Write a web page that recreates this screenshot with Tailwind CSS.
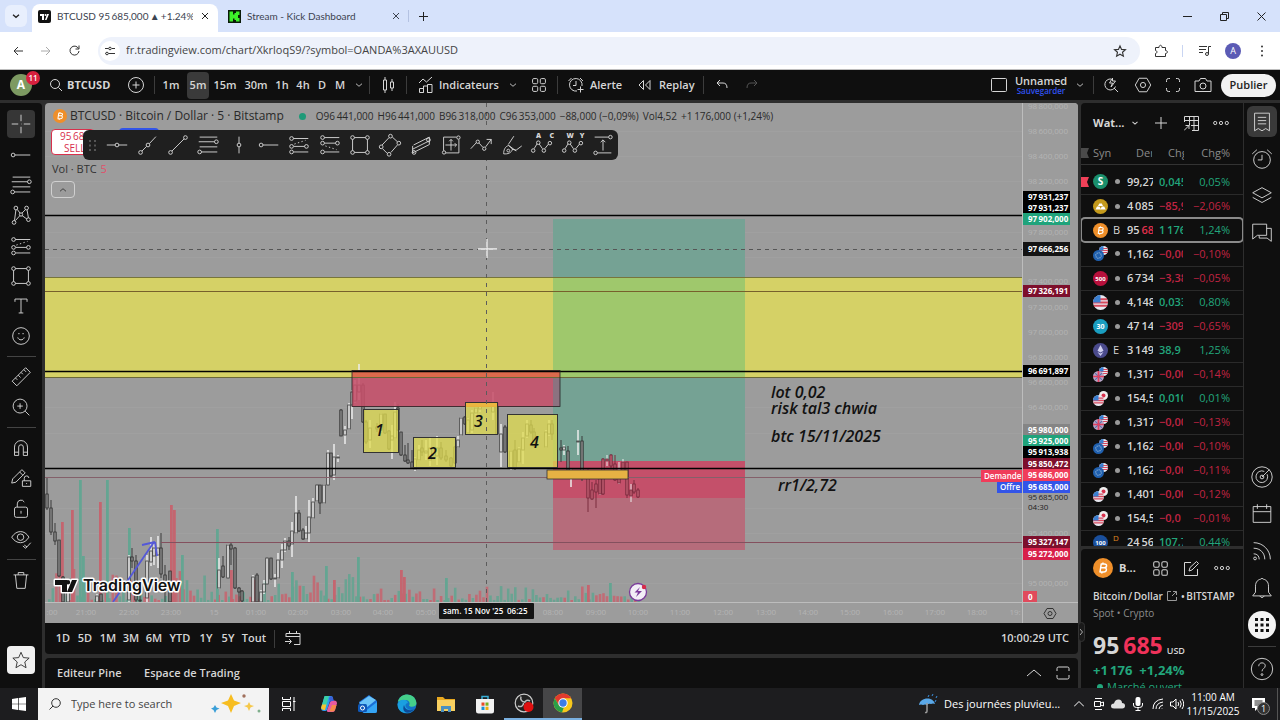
<!DOCTYPE html>
<html lang="fr">
<head>
    <meta charset="UTF-8">
    <meta name="viewport" content="width=device-width, initial-scale=1.0">
    <title>BTCUSD 95 685,000 ▲ +1.24% Unnamed</title>
    <script src="https://cdn.jsdelivr.net/npm/@tailwindcss/browser@4"></script>
</head>
<body class="h-screen flex flex-col overflow-hidden bg-[#2e2e2e] font-['Open_Sans','Noto_Sans',sans-serif] text-[#d6d6d6] text-[11px]">

<!-- icons shared by the toolbars, all on a 28 grid -->
<svg class="hidden">
    <symbol id="i-cross" viewBox="0 0 28 28"><path d="M14 4v7M14 17v7M4 14h7M17 14h7M14 14h.5"/></symbol>
    <symbol id="i-hline" viewBox="0 0 28 28"><path d="M3 14h9M16 14h9"/><circle cx="14" cy="14" r="2"/></symbol>
    <symbol id="i-hray" viewBox="0 0 28 28"><path d="M7.5 14H24"/><circle cx="5.5" cy="14" r="2"/></symbol>
    <symbol id="i-vline" viewBox="0 0 28 28"><path d="M14 5v7M14 16v7"/><circle cx="14" cy="14" r="2"/></symbol>
    <symbol id="i-ray" viewBox="0 0 28 28"><path d="M7.5 20.5l5-5M15.5 12.5L22.5 5"/><circle cx="6" cy="22" r="2"/><circle cx="14" cy="14" r="2"/></symbol>
    <symbol id="i-trend" viewBox="0 0 28 28"><path d="M7.5 20.5l13-13"/><circle cx="6" cy="22" r="2"/><circle cx="22" cy="6" r="2"/></symbol>
    <symbol id="i-fib" viewBox="0 0 28 28"><path d="M5 5.5h19M4 10.5h17M5 16h19M7 21.5h17"/><circle cx="23" cy="10.5" r="2"/><circle cx="5" cy="21.5" r="2"/></symbol>
    <symbol id="i-pattern" viewBox="0 0 28 28"><path d="M7 20L8.5 8.5M10 8l3 4M15 12l4-4M20.5 8.5L22 17M8 20l5-5.5M15 14.5l5.5 4"/><circle cx="6.5" cy="22" r="2"/><circle cx="8.5" cy="6.5" r="2"/><circle cx="14" cy="13.5" r="1.8"/><circle cx="20" cy="6.5" r="2"/><circle cx="22" cy="19" r="2"/></symbol>
    <symbol id="i-long" viewBox="0 0 28 28"><path d="M8 7h16M8.5 15.5H20M8.5 21.5H24"/><path d="M9 13l12-4" stroke-dasharray="1.5 2.5"/><circle cx="6" cy="7" r="2"/><circle cx="6" cy="15.5" r="2"/><circle cx="6" cy="21.5" r="2"/><circle cx="22" cy="15.5" r="2"/></symbol>
    <symbol id="i-short" viewBox="0 0 28 28"><path d="M8 6h16M8 12h12M8.5 21.5H24"/><path d="M9 15l12 4" stroke-dasharray="1.5 2.5"/><circle cx="6" cy="6" r="2"/><circle cx="6" cy="12" r="2"/><circle cx="6" cy="21.5" r="2"/><circle cx="22" cy="12" r="2"/></symbol>
    <symbol id="i-rect" viewBox="0 0 28 28"><path d="M8 6h12M22 8v12M20 22H8M6 20V8"/><circle cx="6" cy="6" r="2"/><circle cx="22" cy="6" r="2"/><circle cx="6" cy="22" r="2"/><circle cx="22" cy="22" r="2"/></symbol>
    <symbol id="i-rot" viewBox="0 0 28 28"><path d="M13 6l-7.5 8M6 18l5 5M15 22l7-8M22 10.5L16.5 5.5"/><circle cx="14.5" cy="4.5" r="2"/><circle cx="23.5" cy="12" r="2"/><circle cx="4.5" cy="16" r="2"/><circle cx="13" cy="24" r="2"/></symbol>
    <symbol id="i-channel" viewBox="0 0 28 28"><path d="M5 15v7.5l18-9V5.5L6 14M5 18.5l18-9"/><circle cx="6.5" cy="22" r="2"/><circle cx="22" cy="8.5" r="2"/></symbol>
    <symbol id="i-range" viewBox="0 0 28 28"><path d="M6 20V5.5h14M22.5 8v14.5H8M14 8v12M8 14h12M12 10l2-2 2 2M18 12l2 2-2 2"/><circle cx="22" cy="6" r="1.8"/><circle cx="6.5" cy="22" r="1.8"/></symbol>
    <symbol id="i-path" viewBox="0 0 28 28"><path d="M3 18l6-6.5M12 12l4 4.5M19 16l6-8M20 8h5v5"/><circle cx="10.5" cy="10.5" r="1.8"/><circle cx="17.5" cy="18" r="1.8"/></symbol>
    <symbol id="i-brush" viewBox="0 0 28 28"><path d="M16 4.5l-6 9M24.5 15l-6 4.5-4.5-1M5 23.5c0-4 1.5-8 5.5-9l4 4c-1 4-5 5.5-9.5 5zM10.5 14.5l8 6"/><circle cx="10" cy="20" r="1.5"/></symbol>
    <symbol id="i-wave" viewBox="0 0 28 28"><path d="M5.5 18l3-5M11 13l3.5 5M17 18l4-5"/><circle cx="4.5" cy="20" r="1.9"/><circle cx="10" cy="11.5" r="1.9"/><circle cx="16" cy="20" r="1.9"/><circle cx="22.5" cy="12" r="1.9"/></symbol>
    <symbol id="i-measure" viewBox="0 0 28 28"><path d="M5 5.5h15M8 22.5h15M14 20V8.5M11.5 11L14 8.5l2.5 2.5"/><circle cx="22" cy="5.5" r="1.9"/><circle cx="6" cy="22.5" r="1.9"/></symbol>
    <symbol id="i-text" viewBox="0 0 28 28"><path d="M7.5 9.5V6.5h13v3M14 6.5V21.5M11.5 21.5h5"/></symbol>
    <symbol id="i-smile" viewBox="0 0 28 28"><circle cx="14" cy="14" r="9"/><path d="M10.5 15.5c1 3.5 6 3.5 7 0M11 11.5h1.5M15.5 11.5h1.5"/></symbol>
    <symbol id="i-ruler" viewBox="0 0 28 28"><path d="M4.5 18.5L19 4l5 5L9.5 23.5zM8 15l2 2M11 12l2.5 2.5M14 9l2 2M17 6l2.5 2.5"/></symbol>
    <symbol id="i-zoom" viewBox="0 0 28 28"><circle cx="13" cy="13" r="7.5"/><path d="M18.5 18.5l4.5 4.5M13 10v6M10 13h6"/></symbol>
    <symbol id="i-magnet" viewBox="0 0 28 28"><path d="M7 22V13a7 7 0 0 1 14 0v9h-4.5v-9a2.5 2.5 0 0 0-5 0v9zM7 18.5h4.5M16.5 18.5H21"/></symbol>
    <symbol id="i-penlock" viewBox="0 0 28 28"><path d="M5 15L15 5l3.5 3.5-10 10L4 19.5zM12.5 7.5L16 11M15.5 17h9v6h-9zM17.5 17v-2.5a2.5 2.5 0 0 1 5-.5M20 19.5v1"/></symbol>
    <symbol id="i-lock" viewBox="0 0 28 28"><rect x="7" y="12" width="14" height="11" rx="2"/><path d="M10 12V8.5a4 4 0 0 1 7.5-2M14 16v3"/></symbol>
    <symbol id="i-eye" viewBox="0 0 28 28"><path d="M4 12c5-8 14-8 18.5 0-4.5 8-13.5 8-18.5 0zM16 21.5l3 2.5 5.5-6M17.5 20.5l3 2"/><circle cx="13.5" cy="12" r="3.5"/></symbol>
    <symbol id="i-trash" viewBox="0 0 28 28"><path d="M6 8.5h16M8 8.5l1.5 14.5h9L20 8.5M11 8.5V6h6v2.5"/></symbol>
    <symbol id="i-star" viewBox="0 0 28 28"><path d="M14 5l2.7 6.2 6.8.6-5.1 4.5 1.5 6.7L14 19.5 8.1 23l1.5-6.7-5.1-4.5 6.8-.6z"/></symbol>
    <symbol id="i-chev" viewBox="0 0 28 28"><path d="M7 11l7 6 7-6"/></symbol>
    <symbol id="i-grid" viewBox="0 0 28 28"><rect x="4" y="4" width="8" height="8" rx="2"/><rect x="16" y="4" width="8" height="8" rx="2"/><rect x="4" y="16" width="8" height="8" rx="2"/><rect x="16" y="16" width="8" height="8" rx="2"/></symbol>
    <symbol id="i-dots" viewBox="0 0 28 28"><circle cx="5" cy="14" r="2.5"/><circle cx="14" cy="14" r="2.5"/><circle cx="23" cy="14" r="2.5"/></symbol>
    <symbol id="i-hex" viewBox="0 0 28 28"><path d="M8 3.5h12l6 10.5-6 10.5H8L2 14z"/><circle cx="14" cy="14" r="4"/></symbol>
    <symbol id="i-btc" viewBox="0 0 20 20"><circle cx="10" cy="10" r="10" fill="#ef8f2a" stroke="none"/><path d="M8.3 5.5L7 14M8 6h3.5c3 0 2.5 3.7 0 3.7H7.8h3.5c3.2 0 2.6 4.3-.6 4.3H6.5M10 4.5L9.8 6M9 14l-.2 1.5" stroke="#fff" stroke-width="1.5" fill="none"/></symbol>
    <symbol id="f-us" viewBox="0 0 16 16"><circle cx="8" cy="8" r="8" fill="#e8e8f0"/><path d="M1 4.5h14M0 8h16M1 11.5h14" stroke="#d8485c" stroke-width="2"/><path d="M0 8A8 8 0 0 1 8 0V8z" fill="#3a7fd0"/></symbol>
    <symbol id="f-eu" viewBox="0 0 16 16"><circle cx="8" cy="8" r="8" fill="#1f5fae"/><circle cx="8" cy="8" r="4" fill="none" stroke="#a9c6dc" stroke-width="1.5" stroke-dasharray="1.5 1.6"/></symbol>
    <symbol id="f-gb" viewBox="0 0 16 16"><circle cx="8" cy="8" r="8" fill="#b9a5c4"/><path d="M3 3l10 10M13 3L3 13" stroke="#5b6fae" stroke-width="1.5"/><path d="M0 8h16M8 0v16" stroke="#e04060" stroke-width="2.5"/></symbol>
    <symbol id="f-jp" viewBox="0 0 16 16"><circle cx="8" cy="8" r="8" fill="#eee"/><circle cx="8" cy="8" r="3.5" fill="#d8304c"/></symbol>
</svg>

<!-- browser tabs -->
<header class="bg-[#d6e2fb] h-8 flex items-end text-[#3c4350] shrink-0">
    <button class="w-[22px] h-[22px] ml-[5px] mb-[5px] rounded-md bg-[#e8effd] grid place-items-center" aria-label="Rechercher un onglet">
        <svg class="w-3 h-3 fill-none stroke-[#222] stroke-3"><use href="#i-chev"/></svg>
    </button>
    <div class="ml-[5px] h-7 w-[186px] bg-white rounded-t-lg flex items-center pl-[6px] pb-1 gap-[6px]">
        <svg class="w-[13px] h-[13px] shrink-0" viewBox="0 0 13 13"><rect width="13" height="13" rx="2" fill="#111"/><path d="M2 4h4v6H4V6H2zM8.5 10L11 4H9L7 10z" fill="#fff"/><circle cx="7.5" cy="5" r="1" fill="#fff"/></svg>
        <span class="w-[136px] overflow-hidden whitespace-nowrap text-[10px] font-[Lato]">BTCUSD 95&#8201;685,000&#8201;▲&#8201;+1.24% U</span>
        <button class="text-[#222] w-3 h-4 grid place-items-center shrink-0" aria-label="Fermer"><svg class="w-2 h-2 stroke-current" viewBox="0 0 8 8"><path d="M1 1l6 6M7 1L1 7"/></svg></button>
    </div>
    <div class="h-7 ml-[10px] w-[180px] flex items-center pb-1 gap-[6px]">
        <svg class="w-[13px] h-[13px] shrink-0" viewBox="0 0 13 13"><rect width="13" height="13" fill="#0a1a08"/><path d="M1.5 1.5h3.5v3h1.5V3H8V1.5h3.5V5H10v3h1.5v3.5H8V10H6.5V8.5H5v3H1.5z" fill="#3df02a"/></svg>
        <span class="flex-1 text-[10px] font-[Lato]">Stream - Kick Dashboard</span>
        <button class="w-6 h-4 grid place-items-center" aria-label="Fermer"><svg class="w-2 h-2 stroke-current" viewBox="0 0 8 8"><path d="M1 1l6 6M7 1L1 7"/></svg></button>
    </div>
    <span class="w-px h-3 bg-[#b4c2e2] mb-[10px]"></span>
    <button class="h-7 pb-1 w-7 grid place-items-center" aria-label="Nouvel onglet"><svg class="w-[9px] h-[9px] stroke-[#222]" viewBox="0 0 9 9"><path d="M4.5 0v9M0 4.5h9"/></svg></button>
    <div class="ml-auto h-8 flex">
        <button class="w-[37px] grid place-items-center" aria-label="Réduire"><svg class="w-[9px] h-[9px] stroke-[#222]" viewBox="0 0 9 9"><path d="M0 4.5h9"/></svg></button>
        <button class="w-[37px] grid place-items-center" aria-label="Restaurer"><svg class="w-[9px] h-[9px] fill-none stroke-[#222]" viewBox="0 0 9 9"><path d="M.5 2.5h6v6h-6zM2.5 2.5v-2h6v6h-2"/></svg></button>
        <button class="w-[37px] grid place-items-center" aria-label="Fermer la fenêtre"><svg class="w-[9px] h-[9px] stroke-[#222]" viewBox="0 0 9 9"><path d="M.5.5l8 8M8.5.5l-8 8"/></svg></button>
    </div>
</header>

<!-- address bar -->
<div class="bg-white h-[38px] border-b border-[#bdbdbd] flex items-center text-[#444] shrink-0">
    <button class="w-8 ml-[2px] grid place-items-center" aria-label="Retour"><svg class="w-[10px] h-[10px] fill-none stroke-[#333]" viewBox="0 0 10 10"><path d="M10 5H1M5 1L1 5l4 4"/></svg></button>
    <button class="w-6 grid place-items-center" aria-label="Suivant"><svg class="w-[10px] h-[10px] fill-none stroke-[#aaa]" viewBox="0 0 10 10"><path d="M0 5h9M5 1l4 4-4 4"/></svg></button>
    <button class="w-8 grid place-items-center" aria-label="Actualiser"><svg class="w-[11px] h-[11px] fill-none stroke-[#333]" viewBox="0 0 11 11"><path d="M9.5 3.5a4.5 4.5 0 1 0 .5 2.5M10 .5v3.5H6.5"/></svg></button>
    <div class="ml-2 h-[28px] flex-1 rounded-full bg-[#eef2fb] flex items-center pl-[2px] pr-3">
        <span class="w-5 h-5 rounded-full bg-white grid place-items-center mr-[6px]"><svg class="w-[10px] h-[10px] fill-none stroke-[#333]" viewBox="0 0 10 10"><path d="M0 2.5h3.5M7 2.5h3M0 7.5h.5M3.5 7.5H10"/><circle cx="5" cy="2.5" r="1.3"/><circle cx="2" cy="7.5" r="1.3"/></svg></span>
        <input type="text" aria-label="Adresse" class="flex-1 bg-transparent outline-none text-[11px]" value="fr.tradingview.com/chart/XkrloqS9/?symbol=OANDA%3AXAUUSD">
        <svg class="w-4 h-4 fill-none stroke-[#333] stroke-2"><use href="#i-star"/></svg>
    </div>
    <div class="flex items-center h-full pl-[14px]">
        <svg class="w-[14px] h-[14px] fill-none stroke-[#333]" viewBox="0 0 14 14"><path d="M1.5 3.5h3.5c0-3 3-3 3 0H11.5v3c2.5 0 2.5 3 0 3v3h-10v-3c2-.5 2-2.5 0-3z"/></svg>
        <span class="w-px h-3 bg-[#c9d5f2] ml-[14px]"></span>
        <svg class="w-3 h-3 ml-4 fill-none stroke-[#333]" viewBox="0 0 12 12"><path d="M0 1.5h8M0 4.5h7M0 7.5h4M12 1.5H9.5V9"/><circle cx="8" cy="9" r="1.5"/></svg>
        <span class="w-4 h-4 ml-[14px] rounded-full bg-[#5b5bb5] text-white text-[9px] grid place-items-center">A</span>
        <svg class="w-3 h-3 ml-[15px] mr-3 fill-[#333]" viewBox="0 0 12 12"><circle cx="6" cy="1.5" r="1"/><circle cx="6" cy="6" r="1"/><circle cx="6" cy="10.5" r="1"/></svg>
    </div>
</div>

<!-- chart top bar -->
<nav class="bg-[#0f0f0f] h-[30px] flex items-center shrink-0 text-[11px] font-semibold">
    <div class="relative w-[42px] grid place-items-center">
        <span class="w-[22px] h-[22px] rounded-full bg-[#7d9a62] text-white text-[12px] grid place-items-center font-bold">A</span>
        <span class="absolute left-[26px] -top-[3px] w-[14px] h-[14px] rounded-full bg-[#d8203e] text-white text-[8px] grid place-items-center">11</span>
    </div>
    <button class="w-[76px] pl-2 flex items-center gap-[5px] font-bold"><svg class="w-3 h-3 fill-none stroke-current shrink-0" viewBox="0 0 12 12"><circle cx="5" cy="5" r="4.5"/><path d="M8.5 8.5L12 12"/></svg>BTCUSD</button>
    <button class="w-9 grid place-items-center" aria-label="Comparer"><svg class="w-4 h-4 fill-none stroke-current" viewBox="0 0 16 16"><circle cx="8" cy="8" r="7.5"/><path d="M8 4.5v7M4.5 8h7"/></svg></button>
    <span class="w-px h-[18px] bg-[#3c3c3c]"></span>
    <button class="w-8">1m</button>
    <button class="w-[22px] h-[27px] rounded bg-[#3a3a3a]">5m</button>
    <button class="w-8">15m</button>
    <button class="w-[30px]">30m</button>
    <button class="w-[22px]">1h</button>
    <button class="w-5">4h</button>
    <button class="w-[18px]">D</button>
    <button class="w-[18px]">M</button>
    <button class="w-5 grid place-items-center" aria-label="Intervalles"><svg class="w-3 h-3 fill-none stroke-current stroke-2"><use href="#i-chev"/></svg></button>
    <span class="w-px h-[18px] bg-[#3c3c3c]"></span>
    <button class="w-9 grid place-items-center" aria-label="Bougies"><svg class="w-[14px] h-4 fill-none stroke-current" viewBox="0 0 14 16"><path d="M2.5 3h3v10h-3zM4 0v3M4 13v3M9.5 5h3v6h-3zM11 2v3M11 11v3"/></svg></button>
    <span class="w-px h-[18px] bg-[#3c3c3c]"></span>
    <button class="w-[92px] pl-[11px] flex items-center gap-[5px]"><svg class="w-4 h-4 fill-none stroke-current shrink-0" viewBox="0 0 16 16"><path d="M1 6l4-4 3.5 3L14 0M1.5 15.5v-4h4v4zM5.5 15.5V9h4v6.5M9.5 15.5v-8H14v8z"/></svg>Indicateurs</button>
    <button class="w-7 grid place-items-center" aria-label="Favoris"><svg class="w-3 h-3 fill-none stroke-current stroke-2"><use href="#i-chev"/></svg></button>
    <button class="w-6 grid place-items-center" aria-label="Modèles"><svg class="w-[18px] h-[18px] fill-none stroke-current stroke-[1.5]"><use href="#i-grid"/></svg></button>
    <span class="w-px h-[18px] bg-[#3c3c3c] ml-[6px]"></span>
    <button class="w-[76px] pl-[10px] flex items-center gap-[6px]"><svg class="w-4 h-4 fill-none stroke-current shrink-0" viewBox="0 0 16 16"><path d="M9 14a6.3 6.3 0 1 1 5-5M8 4v4.5H5M12.5 9.5v6M9.5 12.5h6M.5 4L3.5 1M15 4l-3-3"/></svg>Alerte</button>
    <button class="w-[69px] pl-1 flex items-center gap-2"><svg class="w-[13px] h-3 fill-none stroke-current shrink-0" viewBox="0 0 13 12"><path d="M5.5 1.5v9L1 6zM12 1.5v9L7.5 6z"/></svg>Replay</button>
    <span class="w-px h-[18px] bg-[#3c3c3c]"></span>
    <button class="w-9 grid place-items-center" aria-label="Annuler"><svg class="w-3 h-3 fill-none stroke-current" viewBox="0 0 12 12"><path d="M4 1L1 4l3 3M1 4h6q4 0 4 5"/></svg></button>
    <button class="w-6 grid place-items-center text-[#555]" aria-label="Rétablir"><svg class="w-3 h-3 fill-none stroke-current" viewBox="0 0 12 12"><path d="M8 1l3 3-3 3M11 4H5q-4 0-4 5"/></svg></button>

    <div class="ml-auto flex items-center">
        <svg class="w-4 h-[14px] fill-none stroke-current mr-2" viewBox="0 0 16 14"><rect x=".5" y=".5" width="15" height="13" rx="1"/></svg>
        <button class="w-[52px] flex flex-col items-center leading-[11px]">Unnamed<span class="text-[8px] leading-[9px] text-[#2f52f0]">Sauvegarder</span></button>
        <button class="w-[26px] grid place-items-center" aria-label="Dispositions"><svg class="w-3 h-3 fill-none stroke-current stroke-2"><use href="#i-chev"/></svg></button>
        <span class="w-px h-[18px] bg-[#3c3c3c]"></span>
        <button class="w-[34px] grid place-items-center" aria-label="Recherche rapide"><svg class="w-4 h-4 fill-none stroke-current" viewBox="0 0 16 16"><path d="M8 2a5.5 5.5 0 1 0 4.5 7.5M11 11l4 4M9.5 1L6.5 6h3l-1.5 4 4.5-6H9.5z"/></svg></button>
        <button class="w-[30px] grid place-items-center" aria-label="Paramètres"><svg class="w-[18px] h-[18px] fill-none stroke-current stroke-[1.5]"><use href="#i-hex"/></svg></button>
        <button class="w-[30px] grid place-items-center" aria-label="Plein écran"><svg class="w-[14px] h-[14px] fill-none stroke-current" viewBox="0 0 14 14"><path d="M.5 4V2.5q0-2 2-2H4M10 .5h1.5q2 0 2 2V4M13.5 10v1.5q0 2-2 2H10M4 13.5H2.5q-2 0-2-2V10"/></svg></button>
        <button class="w-[30px] grid place-items-center" aria-label="Capture"><svg class="w-[18px] h-[14px] fill-none stroke-current" viewBox="0 0 18 14"><path d="M1 3h4l1.5-2.5h5L13 3h4v10.5H1z"/><circle cx="9" cy="8" r="3"/></svg></button>
        <button class="w-[55px] h-[23px] ml-[3px] mr-1 rounded-full bg-[#f2f2f2] text-[#222]">Publier</button>
    </div>
</nav>

<main class="flex-1 min-h-0 flex pt-[3px] gap-[3px]">
    <!-- drawing tools -->
    <aside class="w-[42px] bg-[#0f0f0f] flex flex-col items-center rounded-tr">
        <div id="tools1" class="grid h-[243px] mt-[5px]"></div>
        <span class="w-[29px] h-px my-[5px] bg-[#444]"></span>
        <div id="tools2" class="grid h-[60px]"></div>
        <span class="w-[29px] h-px my-[5px] bg-[#444]"></span>
        <div id="tools3" class="grid h-[121px]"></div>
        <span class="w-[29px] h-px my-[5px] bg-[#444]"></span>
        <div id="tools4" class="grid h-[30px]"></div>
        <button class="w-7 h-7 mt-auto mb-[14px] rounded bg-[#f0f0f0] grid place-items-center" aria-label="Favoris"><svg class="w-6 h-6 fill-none stroke-[#222]"><use href="#i-star"/></svg></button>
    </aside>

    <section class="flex-1 min-w-0 flex flex-col">
        <div class="relative flex-1 min-h-0 bg-[#9c9c9c] rounded-t overflow-hidden">
            <svg id="chart" class="absolute inset-0 w-full h-full" viewBox="45 103 1033 520" preserveAspectRatio="none"></svg>

            <div class="absolute left-2 top-[5px] flex items-center text-[#2a2a2a] whitespace-nowrap">
                <svg class="w-[14px] h-[14px] mr-[3px]"><use href="#i-btc"/></svg>
                <span class="text-[12px] leading-4">BTCUSD · Bitcoin / Dollar · 5 · Bitstamp</span>
                <span class="w-[7px] h-[7px] rounded-full bg-[#1f9a78] ml-[15px] mr-[10px]"></span>
                <span class="flex gap-1 text-[10px]"><span>O96&#8201;441,000</span><span>H96&#8201;441,000</span><span>B96&#8201;318,000</span><span>C96&#8201;353,000</span><span>−88,000 (−0,09%)</span><span>Vol4,52</span><span>+1&#8201;176,000 (+1,24%)</span></span>
            </div>
            <button class="absolute left-[6px] top-[26px] w-11 h-[26px] rounded bg-white border border-[#d8304c] text-[#d8304c] text-[10px] leading-3 pl-2 text-left">95&#8201;685<br><span class="pl-1">SELL</span></button>
            <span class="absolute left-[74px] top-[25px] w-10 h-2 rounded bg-[#3355e8]"></span>
            <div class="absolute left-[38px] top-[27px] w-[535px] h-[30px] rounded-md bg-[#1f1f1f] flex items-center">
                <svg class="w-[7px] h-[11px] mx-[6px] fill-[#555] shrink-0" viewBox="0 0 7 11"><path d="M0 0h2v2H0zM5 0h2v2H5zM0 4.5h2v2H0zM5 4.5h2v2H5zM0 9h2v2H0zM5 9h2v2H5z"/></svg>
                <div id="favs" class="flex-1 flex"></div>
            </div>
            <div class="absolute left-[7px] top-[59px] text-[#333] leading-[14px]">Vol · BTC <span class="text-[#e0506a] ml-px">5</span></div>
            <button class="absolute left-[6px] top-[78px] w-6 h-[17px] rounded-sm border border-[#d0d0d0] grid place-items-center" aria-label="Replier"><svg class="w-3 h-3 fill-none stroke-[#333] stroke-2 rotate-180"><use href="#i-chev"/></svg></button>
        </div>

        <div class="h-[31px] bg-[#0f0f0f] rounded-b flex items-center pl-2 pr-[9px] font-semibold">
            <button class="w-5">1D</button>
            <button class="w-6">5D</button>
            <button class="w-[22px]">1M</button>
            <button class="w-6">3M</button>
            <button class="w-[22px]">6M</button>
            <button class="w-[30px]">YTD</button>
            <button class="w-[22px]">1Y</button>
            <button class="w-[22px]">5Y</button>
            <button class="w-[30px]">Tout</button>
            <span class="w-px h-[18px] bg-[#3c3c3c] ml-[5px]"></span>
            <button class="w-9 grid place-items-center" aria-label="Aller à"><svg class="w-4 h-[15px] fill-none stroke-current" viewBox="0 0 16 15"><path d="M1 6V2.5h14v11H9M1 5.5h14M4.5 0v3M11.5 0v3M0 10.5h6M4 8l2.5 2.5L4 13"/></svg></button>
            <span class="ml-auto">10:00:29 UTC</span>
        </div>
        <div class="h-[30px] mt-1 bg-[#0f0f0f] rounded-t flex items-center pl-3 pr-2 font-semibold">
            <button class="w-[87px] text-left">Editeur Pine</button>
            <button>Espace de Trading</button>
            <svg class="ml-auto w-[14px] h-2 fill-none stroke-current" viewBox="0 0 14 8"><path d="M0 7l7-6 7 6"/></svg>
            <svg class="w-[14px] h-[14px] ml-[15px] fill-none stroke-current" viewBox="0 0 14 14"><path d="M1 5V2.5q0-1.5 1.5-1.5h9Q13 1 13 2.5V5M13 9v2.5q0 1.5-1.5 1.5h-9Q1 13 1 11.5V9"/></svg>
        </div>
    </section>

    <!-- watchlist and details -->
    <aside class="w-[199px] flex rounded-tl relative">
        <button class="absolute -left-[3px] top-[519px] w-[7px] h-5 rounded bg-[#1a1a1a] border border-[#333] z-10 grid place-items-center" aria-label="Masquer le volet"><svg class="w-[3px] h-[6px] fill-none stroke-[#aaa]" viewBox="0 0 3 6"><path d="M0 0l2.5 3L0 6"/></svg></button>
        <div class="w-[163px] flex flex-col border-r border-[#2e2e2e]">
            <div class="flex-1 min-h-0 overflow-hidden bg-[#0f0f0f] flex flex-col rounded-tl">
                <div class="h-10 shrink-0 flex items-center pl-3 font-bold">
                    <span class="w-[37px]">Wat...</span>
                    <svg class="w-[10px] h-[10px] fill-none stroke-current stroke-3 mr-[15px]"><use href="#i-chev"/></svg>
                    <button aria-label="Ajouter"><svg class="w-3 h-3 stroke-current" viewBox="0 0 12 12"><path d="M6 0v12M0 6h12"/></svg></button>
                    <button class="ml-[17px]" aria-label="Vue tableau"><svg class="w-[15px] h-[15px] fill-none stroke-current" viewBox="0 0 15 15"><path d="M.5 6V.5h14v14H8M.5 4.5h14M5.5.5v6M10 .5v14M7 9.5h7.5M5.5 6.5v3M0 14.5l5-5M1.5 9.5H5V13"/></svg></button>
                    <button class="ml-[13px]" aria-label="Plus"><svg class="w-[18px] h-[18px] fill-none stroke-current stroke-[1.5]"><use href="#i-dots"/></svg></button>
                </div>
                <table class="table-fixed w-full text-[11px] whitespace-nowrap border-collapse">
                    <colgroup><col class="w-[12px]"><col class="w-[34px]"><col class="w-[26px]"><col class="w-[31px]"><col></colgroup>
                    <thead class="text-[#8a8a8a] border-b border-[#333]">
                        <tr class="h-[21px]"><th class="p-0"><svg class="w-2 h-[10px]" viewBox="0 0 8 10"><path d="M0 0h8L6 5l2 5H0z" fill="#4a4a4a"/></svg></th><th class="p-0 font-normal text-left overflow-hidden">Syn</th><th class="p-0 font-normal"><div class="overflow-hidden w-4 ml-[9px]">Der</div></th><th class="p-0 font-normal text-left"><div class="overflow-hidden w-4 ml-[15px]">Chg</div></th><th class="p-0 font-normal text-right pr-[13px]">Chg%</th></tr>
                    </thead>
                    <tbody id="watch"></tbody>
                </table>
            </div>
            <div class="h-[139px] mt-[3px] bg-[#0f0f0f] rounded-tl shrink-0 overflow-hidden pl-3">
                <div class="flex items-center h-[38px] font-bold">
                    <svg class="w-5 h-5 mr-[6px]"><use href="#i-btc"/></svg>
                    <span class="w-8">B...</span>
                    <svg class="w-[19px] h-[19px] mr-[14px] fill-none stroke-current stroke-[1.5]"><use href="#i-grid"/></svg>
                    <svg class="w-[15px] h-[15px] mr-[14px] fill-none stroke-current" viewBox="0 0 15 15"><path d="M7 1.5H.5v13h13V8M5 10l1-3.5L12.5.5l2 2-6.5 6.5z"/></svg>
                    <svg class="w-[18px] h-[18px] fill-none stroke-current stroke-[1.5]"><use href="#i-dots"/></svg>
                </div>
                <div class="flex items-center h-[18px] text-[10px] leading-none font-semibold whitespace-nowrap">Bitcoin&#8201;/&#8201;Dollar
                    <svg class="w-[10px] h-[10px] mx-1 fill-none stroke-[#999]" viewBox="0 0 10 10"><path d="M4 .5H.5v9h9V6M6 .5h3.5V4M9.5.5L5 5"/></svg>•&#8201;BITSTAMP</div>
                <div class="h-[17px] text-[10px] leading-[17px] text-[#8c8c8c]">Spot • Crypto</div>
                <div class="h-[42px] flex items-end gap-1 leading-[30px] pb-1"><span class="text-[23px] font-bold">95 <span class="text-[#f0325a] -ml-[2px]">685</span></span><span class="text-[9px] leading-[18px] font-semibold">USD</span></div>
                <div class="h-[15px] flex gap-[7px] text-[13px] leading-[13px] font-bold text-[#22a67c]"><span>+1&#8201;176</span><span>+1,24%</span></div>
                <div class="flex items-center gap-1 text-[11px] leading-4 text-[#22a67c] pl-1"><span class="w-[6px] h-[6px] rounded-full bg-[#22a67c]"></span>Marché ouvert</div>
            </div>
        </div>
        <div class="flex-1 bg-[#0f0f0f] flex flex-col items-center" id="rail"></div>
    </aside>
</main>

<!-- taskbar -->
<footer class="h-8 bg-[#1d1d1f] flex items-center shrink-0 text-white">
    <button class="w-[38px] grid place-items-center" aria-label="Démarrer"><svg class="w-[14px] h-[14px] fill-white" viewBox="0 0 14 14"><path d="M0 2l6-1v5.7H0zM6.7 1L14 0v6.7H6.7zM0 7.3h6V13l-6-1zM6.7 7.3H14V14l-7.3-1z"/></svg></button>
    <label class="w-[231px] h-full bg-[#f3f3f3] flex items-center pl-[11px] pr-2">
        <svg class="w-[12px] h-[12px] fill-none stroke-[#333] shrink-0" viewBox="0 0 12 12"><circle cx="7" cy="5" r="4.3"/><path d="M4 8L.5 11.5"/></svg>
        <input type="text" placeholder="Type here to search" aria-label="Recherche" class="w-[150px] pl-[10px] bg-transparent outline-none text-[11px] placeholder:text-[#444]">
        <svg class="w-[50px] h-[22px] shrink-0" viewBox="0 0 50 22"><path d="M20 1l3 6.5 7 2.5-7 3-3 7-3-7-7-3 7-2.5z" fill="#f7bd20"/><path d="M38 9l1.5 3 3.5 1-3.5 1.5L38 18l-1.5-3.5L33 13l3.5-1z" fill="#f5c84a"/><path d="M4 12l1.5 2.5 3 1-3 1.5L4 20l-1.5-3L0 15.5l2.5-1z" fill="#3a9fd8"/><circle cx="33" cy="3" r="1.7" fill="#a0705c"/><circle cx="48" cy="18" r="1.5" fill="#7fae8c"/></svg>
    </label>
    <button class="w-10 grid place-items-center" aria-label="Vue des tâches"><svg class="w-[14px] h-[14px] fill-none stroke-white" viewBox="0 0 14 14"><path d="M.5 4.5h8v5h-8zM.5 0v2.5h8V0M.5 14v-2.5h8V14M12 0v14M11 4.5h2.5"/></svg></button>
    <button class="w-[39px] grid place-items-center" aria-label="Copilot"><svg class="w-[18px] h-[18px]" viewBox="0 0 18 18"><path d="M5 1h6q1.5 0 2 2l-3 3-3 9q-.5 1-2 1H4q-3 0-3-3L4 3q.3-2 1-2z" fill="#2a9df0"/><path d="M5 1h4L6.5 10H2L4 3q.3-2 1-2z" fill="#3ad0a8"/><path d="M2 9.5h4.5L5 15q-3 .5-4-2z" fill="#f5c430"/><path d="M13 17H8q-1.5 0-1-2l3-8q.5-1.5 2-1.5h2q3 0 3 3L15 15q-.5 2-2 2z" fill="#e85aa0"/><path d="M12 16.5H9.5L12 10h4.5L15 15q-.5 1.5-3 1.5z" fill="#f58a4a"/><path d="M11 1q1.5 0 2 2l1 3h-2q-1.5 0-2 1.5L9 3z" fill="#3a62d8"/></svg></button>
    <button class="w-[39px] grid place-items-center" aria-label="Outlook"><svg class="w-5 h-[18px]" viewBox="0 0 20 18"><path d="M1 7L11 0l8 6v10q0 2-2 2H5z" fill="#1a6fd8"/><path d="M1 8L11 1l7 4L8 13z" fill="#6cc4f8"/><path d="M19 7v9q0 2-2 2H5z" fill="#35a5f5"/><rect y="9" width="9" height="8" rx="1.5" fill="#0f58b8"/><circle cx="4.5" cy="13" r="2" fill="none" stroke="#fff"/></svg></button>
    <button class="w-[39px] grid place-items-center" aria-label="Edge"><svg class="w-5 h-5" viewBox="0 0 20 20"><circle cx="10" cy="10" r="9.5" fill="#1273c8"/><path d="M.8 8C3-2 18-2 19.5 9c0 4-6 5-7.5 2.5 2-3-1-6-4-5.5C4 6 2 7 .8 8z" fill="#45d08a"/><path d="M.6 10C2 5 10 4 11 9c-4 0-4 7 5.5 7C11 22 0 19 .6 10z" fill="#1aa0e0"/><path d="M7 11c1 5 5 6 10 4.5C11 22 4 18 7 11z" fill="#0c4a98"/></svg></button>
    <button class="w-[39px] grid place-items-center" aria-label="Explorateur"><svg class="w-[18px] h-4" viewBox="0 0 18 16"><path d="M0 1h6l2 2h10v12H0z" fill="#e8a820"/><path d="M0 4h18v11H0z" fill="#f8d060"/><path d="M4 16v-6h10v6h-3v-3H7v3z" fill="#4a90c0"/></svg></button>
    <button class="w-[39px] grid place-items-center" aria-label="Store"><svg class="w-[18px] h-[19px]" viewBox="0 0 18 19"><path d="M6 5V1.5h6V5" fill="none" stroke="#38b0d8" stroke-width="1.5"/><path d="M0 4h18v12q0 2.5-2.5 2.5h-13Q0 18.5 0 16z" fill="#f2f2f2"/><path d="M5.5 7.5H8.5v3.2H5.5z" fill="#e84a2a"/><path d="M9.5 7.5h3v3.2h-3z" fill="#78b020"/><path d="M5.5 11.7H8.5V15H5.5z" fill="#1a90d8"/><path d="M9.5 11.7h3V15h-3z" fill="#f0b010"/></svg></button>
    <button class="w-[39px] h-full border-b-2 border-[#7ab0e0] grid place-items-center" aria-label="OBS"><svg class="w-5 h-5" viewBox="0 0 20 20"><circle cx="10" cy="10" r="8.8" fill="#222" stroke="#ccc" stroke-width="1.2"/><path d="M7 3.5c-1 3 1 5.5 3.5 5.5M16 8c-2.5-1.5-5-.5-5.5 2M4 13c3 1.5 5.5 0 5.5-3" fill="none" stroke="#bbb" stroke-width="1.5"/><circle cx="14.5" cy="14" r="5" fill="#e01010"/></svg></button>
    <button class="w-[39px] h-full border-b-2 border-[#7ab0e0] bg-[#464648] grid place-items-center" aria-label="Chrome"><svg class="w-5 h-5" viewBox="0 0 20 20"><circle cx="10" cy="10" r="9.5" fill="#f8c81c"/><path d="M1.8 5.3A9.5 9.5 0 0 1 18.2 5.3H10L6 12.5z" fill="#e23a2e"/><path d="M1.8 5.3L6 12.5h5.5l-2.5 7A9.5 9.5 0 0 1 1.8 5.3z" fill="#2a9f48"/><circle cx="10" cy="10" r="4.7" fill="#fff"/><circle cx="10" cy="10" r="3.7" fill="#3c7de8"/></svg></button>
    <div class="ml-auto flex items-center">
        <svg class="w-[19px] h-5 mr-[6px]" viewBox="0 0 19 20"><path d="M0 11C1 3 14 2 16 10q-2-1-4 0-2-1-4 1-2-1-4 0-2-1-4 0z" fill="#5aa8e8"/><path d="M8 9v8q0 2-2 1.5" fill="none" stroke="#999" stroke-width="1.5"/><path d="M10 1l-1 2M14 0l-1 2M18 2l-1 2M17 6l-1 2" stroke="#3a90e0"/></svg>
        <span class="w-[130px] text-[11px] whitespace-nowrap">Des journées pluvieu...</span>
        <svg class="w-[10px] h-[6px] fill-none stroke-white" viewBox="0 0 10 6"><path d="M0 5.5l5-5 5 5"/></svg>
        <svg class="w-[10px] h-3 ml-[10px] fill-none stroke-white" viewBox="0 0 10 12"><path d="M.5 3.5h6v5h-6zM6.5 5L9.5 4v4l-3-1M1 .5h7M1 11.5h7"/></svg>
        <svg class="w-[14px] h-[10px] ml-[7px] fill-[#e0e0e0]" viewBox="0 0 14 10"><path d="M3 9.5q-3 0-3-2.5t3-2.5Q4 .5 7.5.5T11 4q3 0 3 2.8T11 9.5z"/></svg>
        <svg class="w-[10px] h-[14px] ml-2 fill-white" viewBox="0 0 10 14"><rect x="2.5" width="5" height="9" rx="2"/><path d="M.5 6v2q0 2.5 3 2.5h3q3 0 3-2.5V6M5 10v3M2.5 13.5h5" fill="none" stroke="#fff"/></svg>
        <svg class="w-[12px] h-3 ml-[9px] fill-none stroke-white" viewBox="0 0 12 12"><path d="M1 11Q1 2 11 1M4 11q0-6 7-7M7 11q0-3 4-4M10 11v-.5"/></svg>
        <svg class="w-[14px] h-3 ml-[6px] fill-none stroke-white" viewBox="0 0 14 12"><path d="M.5 4H3l3-3v10L3 8H.5zM8 4q1.5 2 0 4M10 2.5q2.5 3.5 0 7M12 1q3.5 5 0 10"/></svg>
        <div class="w-[58px] text-center text-[10px] leading-[14px]">11:00 AM<br>11/15/2025</div>
        <div class="relative w-8 h-8 grid place-items-center mr-[3px]"><svg class="w-[13px] h-[13px]" viewBox="0 0 13 13"><path d="M0 0h13v10H6l-3 3v-3H0z" fill="#fff"/><path d="M2.5 3h8M2.5 5h8M2.5 7h5" stroke="#222"/></svg><span class="absolute left-[15px] top-[14px] w-[13px] h-[13px] rounded-full bg-[#333] border border-[#888] text-[9px] leading-[11px] text-center">1</span></div>
        <span class="w-px h-8 bg-[#555] mr-[2px]"></span>
    </div>
</footer>

<script>
    const use = (id) => `<svg class="w-[26px] h-[26px] fill-none stroke-current"><use href="#i-${id}"/></svg>`;
    const tools = (el, list) => {
        document.getElementById(el).innerHTML = list.map((id) => id === 'cross'
            ? `<button class="w-7 h-7 self-center rounded bg-[#363636] grid place-items-center" aria-label="${id}">${use(id)}</button>`
            : `<button class="w-7 grid place-items-center" aria-label="${id}">${use(id)}</button>`).join('');
    };
    tools('tools1', ['cross', 'hray', 'fib', 'pattern', 'long', 'rect', 'text', 'smile']);
    tools('tools2', ['ruler', 'zoom']);
    tools('tools3', ['magnet', 'penlock', 'lock', 'eye']);
    tools('tools4', ['trash']);

    document.getElementById('favs').innerHTML =
        ['hline', 'ray', 'trend', 'fib', 'vline', 'hray', 'long', 'short', 'rect', 'rot', 'channel', 'range', 'path', 'brush', 'wave:AC', 'wave:WY', 'measure'].map((s) => {
            const [id, cap] = s.split(':');
            const label = cap ? `<span class="absolute top-0 left-[9px] w-[18px] flex justify-between text-[7px] leading-[8px] font-bold"><b>${cap[0]}</b><b>${cap[1]}</b></span>` : '';
            return `<button class="relative flex-1 grid place-items-center" aria-label="${id}">${use(id)}${label}</button>`;
        }).join('');

    // right rail
    const rail = {
        list: '<path d="M6 4.5h16v19l-4-2.5-4 2.5-4-2.5-4 2.5zM9.5 9h9M9.5 12.5h9M9.5 16h9"/>',
        alarm: '<circle cx="14" cy="15" r="9"/><path d="M14 9.5V15h-4.5M3.5 8.5l5-4.5M24.5 8.5l-5-4.5"/>',
        layers: '<path d="M14 5l10 5.5L14 16 4 10.5zM4 15.5L14 21l10-5.5"/>',
        chat: '<path d="M4 4.5h15v12H9l-5 4zM19 9h5v14l-4.5-3.5H11V17"/>',
        radar: '<circle cx="14" cy="14" r="11"/><path d="M19.5 11a6.3 6.3 0 1 1-3-3M14 14l8-8"/><circle cx="14" cy="14" r="2"/>',
        cal: '<path d="M4.5 6h19v17h-19zM4.5 11.5h19M9 3.5v5M19 3.5v5"/>',
        feed: '<path d="M5 5c10 0 18 8 18 18M5 11c7 0 12 5 12 12M5 17c4 0 6 2.5 6 6"/><circle cx="6.5" cy="22" r="1.5"/>',
        bell: '<path d="M4 22.5h20l-3-4V12c0-5-3-7-5.5-7.5q-1.5-2-3 0C10 5 7 7 7 12v6.5zM11.5 22.5q2.5 3.5 5 0"/>',
        apps: '<circle cx="14" cy="14" r="14" fill="#f4f4f4" stroke="none"/><path d="M7 7h3v3H7zM12.5 7h3v3h-3zM18 7h3v3h-3zM7 12.5h3v3H7zM12.5 12.5h3v3h-3zM18 12.5h3v3h-3zM7 18h3v3H7zM12.5 18h3v3h-3zM18 18h3v3h-3z" fill="#111" stroke="none"/>',
        help: '<circle cx="14" cy="14" r="11.5"/><path d="M10.5 11c0-5 7-4.5 7-.5 0 3-3.5 3-3.5 6"/><circle cx="14" cy="20" r="1"/>',
    };
    const railBtn = (k) => {
        const size = k === 'apps' ? 'w-[28px] h-[28px]' : 'w-[26px] h-[26px]';
        const box = k === 'list' ? 'w-[30px] h-[31px] my-[3px] rounded-md bg-[#3a3a3a]' : 'w-[30px] h-[37px]';
        return `<button class="${box} shrink-0 grid place-items-center" aria-label="${k}"><svg class="${size} fill-none stroke-current" viewBox="0 0 28 28">${rail[k]}</svg></button>`;
    };
    document.getElementById('rail').innerHTML = ['list', 'alarm', 'layers', 'chat'].map(railBtn).join('')
        + '<div class="mt-auto flex flex-col items-center pb-px">' + ['radar', 'cal', 'feed', 'bell', 'apps'].map(railBtn).join('')
        + '<span class="w-7 h-px my-[3px] bg-[#3c3c3c]"></span>' + railBtn('help') + '</div>';

    // thousands are set apart by a thin space
    const thin = (t) => t.replace(/(\d) (?=\d)/g, '$1\u2009');

    // watchlist rows: icon, symbol, last, change, percent
    const coin = (bg, t) => `<svg class="w-[15px] h-[15px]" viewBox="0 0 15 15"><circle cx="7.5" cy="7.5" r="7.5" fill="${bg}"/>${t}</svg>`;
    const num = (t, s) => `<text x="7.5" y="${s > 8 ? 11 : 10}" text-anchor="middle" font-size="${s}" font-weight="700" fill="#fff">${t}</text>`;
    const pair = (a, b) => `<svg class="w-[15px] h-[15px]" viewBox="0 0 15 15"><use href="#f-${b}" x="6" y="0" width="9" height="9"/><use href="#f-${a}" x="0" y="4" width="11" height="11"/></svg>`;
    const rows = [
        [coin('#1a8f6c', num('S', 10)), '', '99,27', '0,045', '0,05%'],
        [coin('#c49a1c', '<path d="M2.5 10.5l1.5-3h2.5l1.5 3zM7.5 10.5l1.2-3h2.5l1.5 3zM5 7l1.3-2.5h2.5L10 7z" fill="#fff"/>'), '', '4 085', '−85,9', '−2,06%'],
        ['<svg class="w-[15px] h-[15px]"><use href="#i-btc"/></svg>', 'B', '95\u2009<span class="text-[#e0304c]">68</span>', '1 176', '1,24%'],
        [pair('eu', 'us'), '', '1,162', '−0,00', '−0,10%'],
        [coin('#b8103c', num('500', 6)), '', '6 734', '−3,38', '−0,05%'],
        ['<svg class="w-[15px] h-[15px]"><use href="#f-us"/></svg>', '', '4,148', '0,033', '0,80%'],
        [coin('#1a9ec0', num('30', 7)), '', '47 14', '−309', '−0,65%'],
        [coin('#4a4a8c', '<path d="M7.5 2L4.5 7.8l3 1.7 3-1.7zM4.5 9l3 4 3-4-3 1.5z" fill="#d0d0f0"/>'), 'E', '3 149', '38,9', '1,25%'],
        [pair('gb', 'us'), '', '1,317', '−0,00', '−0,14%'],
        [pair('us', 'jp'), '', '154,5', '0,010', '0,01%'],
        [pair('gb', 'us'), '', '1,317', '−0,00', '−0,13%'],
        [pair('eu', 'us'), '', '1,162', '−0,00', '−0,10%'],
        [pair('eu', 'us'), '', '1,162', '−0,00', '−0,11%'],
        [pair('us', 'jp'), '', '1,401', '−0,00', '−0,12%'],
        [pair('us', 'jp'), '', '154,5', '−0,0', '−0,01%'],
        [coin('#1a4f9c', num('100', 6)), 'D', '24 56', '107,7', '0,44%'],
    ];
    document.getElementById('watch').innerHTML = '<tr class="h-[6px]"><td></td></tr>' + rows.map(([icon, sym, last, chg, pct], i) => {
        const tone = chg[0] === '−' ? 'text-[#c02442]' : 'text-[#22a67c]';
        const ring = i === 2 ? 'outline-2 -outline-offset-1 outline-[#8a8a8a] rounded' : 'border-b border-[#2a2a2a]';
        const flag = i === 0 ? '<svg class="w-2 h-[10px]" viewBox="0 0 8 10"><path d="M0 0h8L6 5l2 5H0z" fill="#f04058"/></svg>' : '';
        const mark = sym === 'D' ? '<sup class="text-[#e08a20] text-[8px]">D</sup>' : sym ? `<span class="text-[11px]">${sym}</span>` : '<span class="w-[5px] h-[5px] ml-[2px] rounded-full bg-[#9a9a9a]"></span>';
        return `<tr class="h-6 ${ring}"><td class="p-0">${flag}</td><td class="p-0"><div class="flex items-center gap-[5px]">${icon}${mark}</div></td>`
            + `<td class="p-0"><div class="overflow-hidden font-semibold">${thin(last)}</div></td>`
            + `<td class="p-0 pl-[6px]"><div class="overflow-hidden w-6 font-semibold ${tone}">${thin(chg)}</div></td>`
            + `<td class="p-0 pr-[13px] text-right font-medium ${tone}">${pct}</td></tr>`;
    }).join('');

    // ---- chart ----
    const out = [];
    const rect = (x, y, w, h, fill, extra = '') => out.push(`<rect x="${x}" y="${y}" width="${w}" height="${h}" fill="${fill}" ${extra}/>`);
    const line = (x1, y1, x2, y2, stroke, w = 1, extra = '') => out.push(`<path d="M${x1} ${y1}L${x2} ${y2}" stroke="${stroke}" stroke-width="${w}" fill="none" ${extra}/>`);
    const text = (x, y, t, size, fill, extra = '') => out.push(`<text x="${x}" y="${y}" font-size="${size}" fill="${fill}" ${extra}>${thin(t)}</text>`);

    [131, 156, 181, 232, 257, 407, 433, 508, 533, 558, 583].forEach((y) => line(45, y + .5, 1022, y + .5, '#a0a0a0'));
    rect(45, 277, 977, 100, '#d5d166');
    rect(553, 219, 192, 242, '#75a294');
    rect(553, 277, 192, 100, '#9fc86c');
    rect(553, 461, 192, 37, '#c4506a');
    rect(553, 498, 192, 52, '#b66c7b');

    // volume, [x, top, up]
    const tall = [[62, 522, 0], [72, 510, 0], [80, 480, 1], [83, 556, 1], [100, 502, 0], [107, 480, 1], [129, 528, 1], [171, 505, 0], [174, 510, 0], [182, 555, 1], [217, 529, 1], [231, 570, 0], [292, 572, 1], [326, 566, 1], [334, 580, 0], [358, 557, 1], [401, 570, 0], [404, 577, 0], [446, 578, 1], [588, 585, 0], [610, 583, 1]];
    for (let x = 48; x < 640; x += 3.53) {
        const n = Math.abs(Math.sin(x * 12.9898) * 43758.5453) % 1;
        const m = Math.abs(Math.sin(x * 4.137) * 1931.77) % 1;
        const max = x < 180 ? 32 : x < 360 ? 26 : x < 420 ? 12 : 14;
        const h = 2 + n * n * max;
        rect(x.toFixed(1), (602 - h).toFixed(1), 2.6, h.toFixed(1), m > .48 ? '#6aa392' : '#c06c75');
    }
    tall.forEach(([x, y, up]) => rect(x - 1, y, 2.8, 602 - y, up ? '#64a592' : '#c4656f'));

    // candles: [x, high, body top, body bottom, low, up]
    const candles = [
        [47, 477, 494, 508, 510, 0], [51, 500, 508, 532, 535, 0], [55, 523, 532, 541, 545, 0], [59, 540, 540, 576, 577, 0], [63, 576, 577, 602, 602, 0], [68, 585, 590, 602, 602, 1],
        [97, 594, 596, 602, 602, 1], [101, 594, 594, 602, 602, 0], [129, 555, 557, 600, 602, 1], [132, 548, 557, 561, 568, 0], [136, 555, 561, 600, 602, 0], [140, 590, 600, 601, 602, 0],
        [147, 555, 561, 598, 602, 1], [151, 537, 551, 562, 566, 1], [154, 544, 548, 556, 565, 1], [158, 536, 548, 555, 568, 1], [161, 533, 548, 574, 578, 0], [165, 565, 575, 590, 602, 0], [170, 571, 571, 602, 602, 0],
        [219, 558, 570, 588, 589, 1], [223, 556, 566, 577, 578, 0], [228, 544, 545, 578, 578, 1], [231, 543, 545, 549, 565, 0], [235, 547, 548, 588, 589, 0], [239, 587, 588, 592, 602, 0], [242, 590, 591, 601, 602, 0],
        [253, 575, 577, 602, 602, 1], [257, 573, 575, 602, 602, 0], [261, 590, 592, 602, 602, 1], [264, 580, 584, 592, 594, 1], [267, 558, 558, 584, 584, 1], [271, 558, 558, 579, 580, 0], [275, 574, 578, 579, 587, 1],
        [278, 553, 560, 578, 579, 1], [282, 544, 550, 560, 568, 1], [285, 538, 541, 550, 552, 1], [289, 537, 541, 546, 550, 0], [292, 522, 531, 544, 557, 1], [296, 496, 513, 533, 534, 1], [299, 510, 513, 531, 532, 0],
        [303, 528, 530, 539, 540, 0], [306, 526, 533, 539, 540, 1], [309, 500, 517, 533, 542, 1], [313, 498, 502, 518, 519, 1], [317, 485, 485, 501, 502, 1], [320, 485, 485, 503, 514, 0], [324, 484, 485, 503, 504, 1],
        [328, 450, 453, 485, 485, 1], [331, 453, 453, 476, 478, 0], [334, 444, 457, 475, 480, 1], [338, 455, 457, 458, 462, 1], [341, 409, 410, 436, 436, 0], [345, 426, 430, 435, 444, 1], [349, 403, 405, 429, 430, 1], [352, 390, 392, 405, 419, 1],
        [355, 380, 385, 401, 403, 1], [359, 364, 385, 392, 400, 1], [363, 383, 385, 422, 423, 0], [366, 420, 422, 442, 444, 0], [370, 420, 428, 440, 448, 1], [377, 423, 427, 429, 432, 0], [381, 413, 414, 430, 432, 1], [385, 414, 414, 433, 434, 0],
        [389, 430, 431, 449, 450, 0], [392, 425, 436, 440, 459, 1], [395, 402, 412, 438, 439, 1], [398, 404, 408, 430, 431, 0], [401, 432, 432, 455, 456, 0], [405, 445, 455, 461, 462, 0], [408, 443, 460, 463, 464, 0], [412, 450, 462, 468, 469, 0],
        [415, 457, 459, 469, 471, 1], [419, 445, 450, 460, 461, 1], [422, 440, 448, 452, 456, 0], [426, 440, 451, 453, 460, 1], [430, 437, 448, 460, 466, 1], [437, 436, 448, 456, 465, 1], [441, 442, 448, 458, 460, 0], [446, 450, 456, 460, 462, 0], [451, 457, 458, 466, 468, 0], [455, 446, 447, 463, 464, 0],
        [458, 436, 440, 447, 448, 1], [461, 417, 418, 435, 436, 1], [465, 416, 417, 424, 425, 0], [468, 418, 420, 433, 434, 1], [472, 410, 413, 430, 433, 1], [476, 405, 408, 413, 415, 1], [480, 403, 406, 409, 412, 1], [493, 392, 406, 412, 420, 1], [497, 402, 403, 434, 435, 0],
        [501, 424, 434, 452, 467, 1], [505, 425, 427, 452, 453, 0], [511, 450, 451, 468, 470, 1], [515, 440, 450, 468, 470, 0], [519, 447, 449, 462, 463, 1], [523, 432, 438, 450, 464, 1], [527, 420, 424, 436, 438, 1], [531, 420, 425, 432, 434, 0], [534, 428, 432, 446, 447, 0], [546, 430, 432, 447, 448, 1], [549, 420, 424, 434, 436, 1], [552, 420, 424, 434, 440, 0],
        [561, 440, 448, 450, 462, 0], [564, 445, 447, 450, 455, 1], [568, 446, 451, 470, 475, 0], [571, 468, 470, 472, 487, 1], [578, 430, 441, 442, 455, 1], [582, 436, 441, 478, 481, 0], [588, 468, 474, 498, 512, 0], [592, 482, 490, 499, 500, 0], [596, 480, 484, 492, 508, 0], [600, 470, 478, 494, 495, 1], [603, 458, 459, 494, 495, 0], [607, 455, 459, 461, 466, 1], [611, 454, 455, 466, 468, 0], [615, 455, 464, 480, 481, 0], [619, 462, 474, 483, 484, 1], [623, 459, 462, 474, 478, 1], [627, 462, 462, 495, 498, 0], [631, 484, 490, 496, 502, 1], [634, 480, 484, 492, 494, 0], [638, 488, 490, 497, 498, 0],
    ];
    candles.forEach(([x, hi, top, bot, lo, up]) => {
        const sl = x > 586; // inside the stop zone the bodies take its tint
        line(x, hi, x, lo, up ? '#ececec' : sl ? '#7a2c3e' : '#3a3a3a', up && !sl ? 1.5 : 1);
        rect(x - 1.2, top, 2.4, Math.max(bot - top, 1), sl ? '#b8586c' : up ? '#e8e8e8' : '#828282', `stroke="${sl ? '#6a2234' : '#222'}" stroke-width=".7"`);
    });

    // supply zone
    rect(352, 370, 201, 37, '#c6506a', 'fill-opacity=".88"');
    rect(352, 370, 208, 7, '#dc6a4c');
    rect(553, 377, 7, 30, '#8c7280');

    // price levels
    line(45, 215.5, 1022, 215.5, '#000', 1.5);
    line(45, 277.5, 1022, 277.5, '#77753c');
    line(45, 291.5, 1022, 291.5, '#77602c');
    line(45, 371.5, 1022, 371.5, '#000', 1.5);
    line(45, 377.5, 1022, 377.5, '#6a6838');
    line(45, 468.5, 1022, 468.5, '#000', 1.6);
    line(45, 477.5, 1022, 477.5, '#84606a');
    line(161, 542.5, 1022, 542.5, '#84505e');
    rect(352, 370.5, 208, 36, 'none', 'stroke="#222" stroke-width=".8"');

    // consolidation boxes
    [[363, 409, 35, 43], [413, 437, 42, 30], [465, 402, 32, 32], [507, 414, 50, 53]].forEach(([x, y, w, h]) => rect(x + .5, y + .5, w, h, '#dfdc50', 'fill-opacity=".76" stroke="#333"'));
    rect(466, 403, 31, 4, '#eeb43c', 'fill-opacity=".85"');
    rect(547, 470, 81, 9, '#e6b244', 'stroke="#333" stroke-width=".8"');
    const note = 'font-style="italic" font-weight="600"';
    text(375, 436, '1', 16, '#111', note);
    text(428, 459, '2', 16, '#111', note);
    text(474, 427, '3', 16, '#111', note);
    text(530, 448, '4', 16, '#111', note);
    text(771, 398, 'lot 0,02', 16, '#111', note);
    text(771, 414, 'risk tal3 chwia', 16, '#111', note);
    text(771, 442, 'btc 15/11/2025', 16, '#111', note);
    text(778, 491, 'rr1/2,72', 16, '#111', note);

    // arrow
    line(113, 602, 154, 542, '#5458d8', 1.8);
    line(142, 545, 155, 542, '#5458d8', 1.8);
    line(155, 542, 157, 556, '#5458d8', 1.8);

    // crosshair
    line(45, 249.5, 1022, 249.5, '#555', 1, 'stroke-dasharray="4 4"');
    line(486.5, 103, 486.5, 602, '#5c5c5c', 1, 'stroke-dasharray="4 5"');
    line(478, 249, 497, 249, '#f0f0f0', 1.3);
    line(487, 239, 487, 258, '#f0f0f0', 1.3);

    // logo
    out.push('<g fill="#111" stroke="#fff" stroke-width="3" paint-order="stroke" stroke-linejoin="round"><path d="M55 580h12v12h-5v-7h-7zM72 592l5-12h-5l-5 12zM68 580a2.2 2.2 0 1 1 0 4.4 2.2 2.2 0 1 1 0-4.4z"/><text x="83" y="591" font-size="16" font-weight="600" font-family="Inter">TradingView</text></g>');
    out.push('<circle cx="638" cy="592" r="8.5" fill="#f2eef6" stroke="#7a3a9a" stroke-width="1.3"/><path d="M640 587l-5.5 5.5h3.5l-2 4.5 6-6h-4z" fill="#7a3a9a"/><circle cx="644" cy="587" r="2.2" fill="#d82a4a"/>');

    // axes
    rect(1022, 103, 56, 520, '#9c9c9c');
    rect(45, 603, 1033, 20, '#9c9c9c');
    line(45, 602.5, 1078, 602.5, '#bdbdbd');
    line(1022.5, 103, 1022.5, 623, '#bdbdbd');
    [['98 800,000', 106], ['98 600,000', 131], ['98 400,000', 156], ['98 200,000', 181], ['97 800,000', 232], ['97 400,000', 281], ['97 200,000', 307], ['97 000,000', 332], ['96 800,000', 357], ['96 600,000', 382], ['96 400,000', 407], ['95 400,000', 533], ['95 000,000', 583]]
        .forEach(([t, y]) => text(1028, y + 3, t, 8, '#b4b4b4'));
    [[52, ':00'], [86, '21:00'], [129, '22:00'], [171, '23:00'], [214, '15'], [256, '01:00'], [298, '02:00'], [341, '03:00'], [383, '04:00'], [426, '05:00'], [553, '08:00'], [596, '09:00'], [638, '10:00'], [680, '11:00'], [723, '12:00'], [766, '13:00'], [808, '14:00'], [850, '15:00'], [893, '16:00'], [935, '17:00'], [977, '18:00'], [1015, '19:']]
        .forEach(([x, t]) => text(x, 615, t, 8, '#b4b4b4', 'text-anchor="middle"'));
    [['97 931,237', 191, '#000'], ['97 931,237', 202, '#000'], ['97 902,000', 213, '#1fa37b'], ['97 666,256', 242, '#141414', 14], ['97 326,191', 285, '#7d0f2c'], ['96 691,897', 365, '#000'], ['95 980,000', 424, '#858585'], ['95 925,000', 435, '#1fa37b'], ['95 913,938', 446, '#000'], ['95 850,472', 458, '#7d0f2c'], ['95 686,000', 469, '#f03c5a'], ['95 685,000', 481, '#3355e8'], ['95 327,147', 536, '#7d0f2c'], ['95 272,000', 548, '#d8204a']]
        .forEach(([t, y, c, h = 12]) => { rect(1023, y, 47, h, c); text(1028, y + h / 2 + 3, t, 8, '#fff', 'font-weight="700"'); });
    text(1028, 500, '95 685,000', 8, '#222');
    text(1028, 510, '04:30', 8, '#222');
    rect(1023, 591, 14, 11, '#e04a5c');
    text(1028, 600, '0', 8, '#fff', 'font-weight="700"');
    rect(981, 470, 41, 12, '#f03c5a');
    text(984, 479, 'Demande', 8, '#fff', 'font-weight="600"');
    rect(997, 482, 25, 11, '#3355e8');
    text(1000, 490, 'Offre', 8, '#fff', 'font-weight="600"');
    rect(439, 603, 95, 16, '#141414', 'rx="1"');
    text(443, 614, 'sam. 15 Nov \'25', 8, '#fff', 'font-weight="600"');
    text(507, 614, '06:25', 8, '#fff', 'font-weight="600"');
    out.push('<path d="M1047 608.5h6l3 5-3 5h-6l-3-5z" fill="none" stroke="#333"/><circle cx="1050" cy="613.5" r="2" fill="none" stroke="#333"/>');

    document.getElementById('chart').innerHTML = out.join('');
</script>
</body>
</html>
